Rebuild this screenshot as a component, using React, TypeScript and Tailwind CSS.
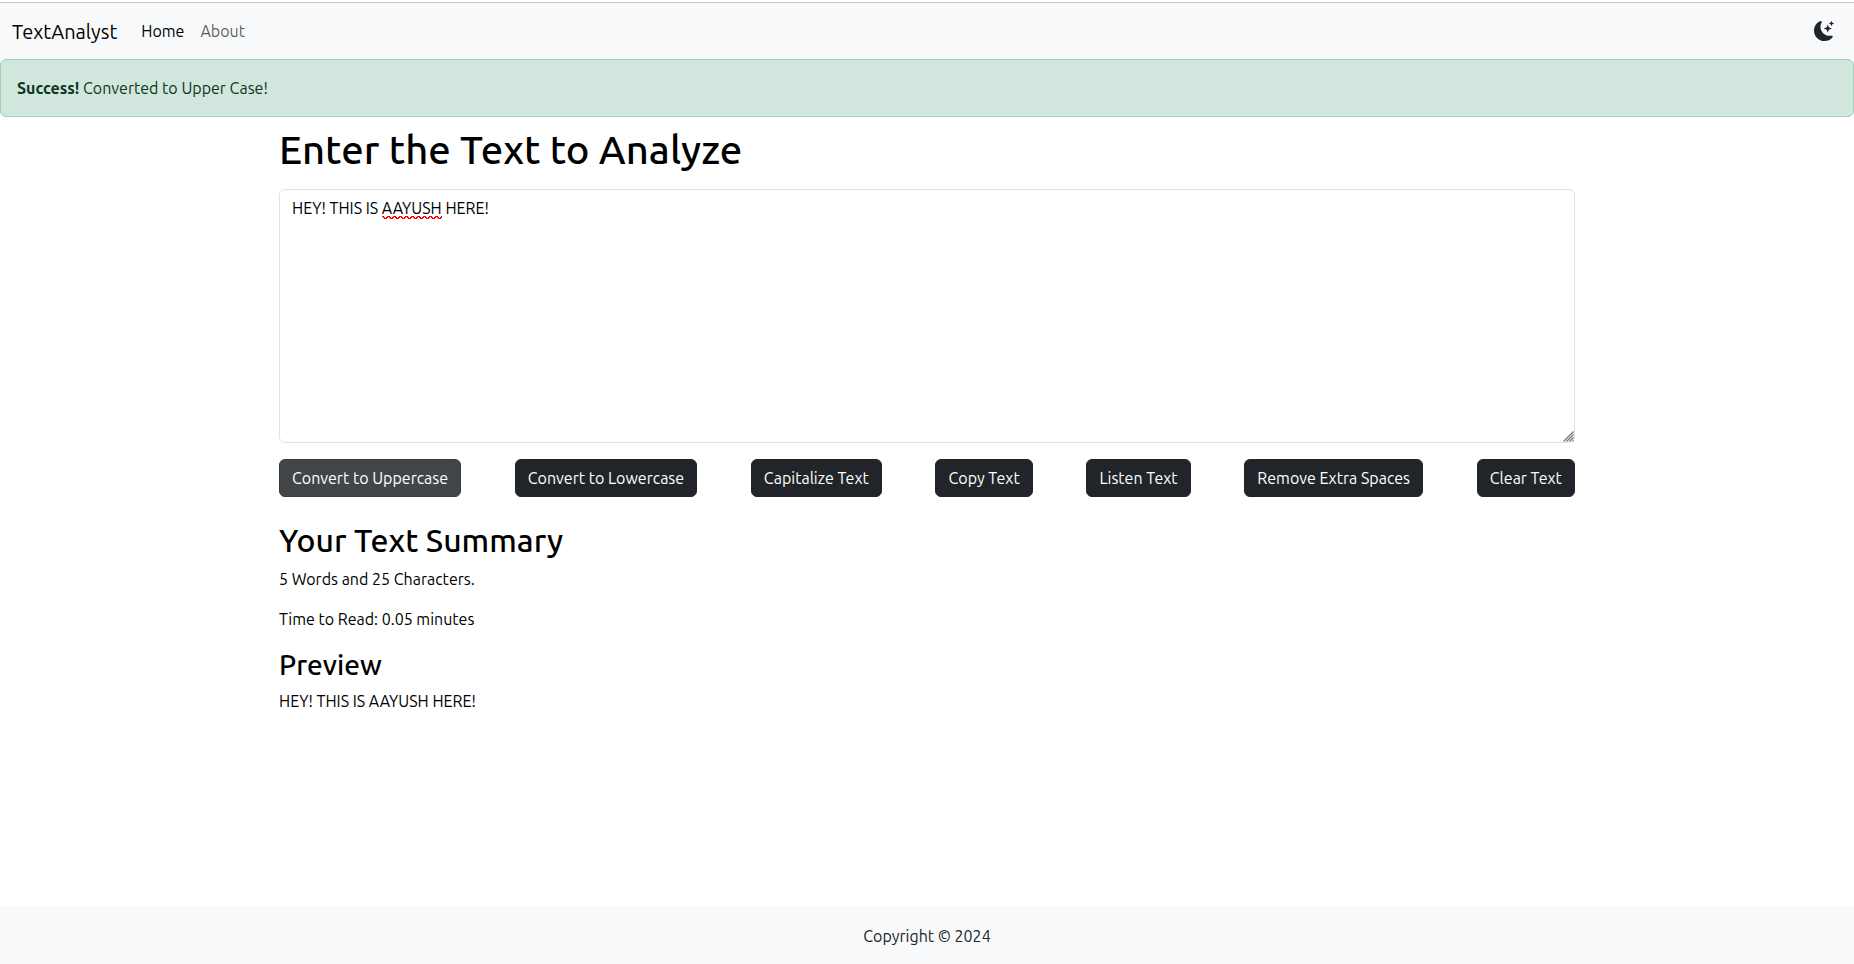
import { useState } from "react";
import { BsMoonStarsFill } from "react-icons/bs";

const buttonBase =
  "rounded-md border px-3 py-1.5 leading-6 text-white hover:border-[#373b3e] hover:bg-[#424649]";

type Action = { label: string; message: string; run: (text: string) => string };

const actions: Action[] = [
  { label: "Convert to Uppercase", message: "Converted to Upper Case!", run: (t) => t.toUpperCase() },
  { label: "Convert to Lowercase", message: "Converted to Lower Case!", run: (t) => t.toLowerCase() },
  {
    label: "Capitalize Text",
    message: "Text Capitalized!",
    run: (t) => t.toLowerCase().replace(/\b\w/g, (c) => c.toUpperCase()),
  },
  {
    label: "Copy Text",
    message: "Copied to Clipboard!",
    run: (t) => {
      navigator.clipboard?.writeText(t);
      return t;
    },
  },
  {
    label: "Listen Text",
    message: "Speaking the Text!",
    run: (t) => {
      window.speechSynthesis?.speak(new SpeechSynthesisUtterance(t));
      return t;
    },
  },
  {
    label: "Remove Extra Spaces",
    message: "Extra Spaces Removed!",
    run: (t) => t.split(/\s+/).join(" ").trim(),
  },
  { label: "Clear Text", message: "Text Cleared!", run: () => "" },
];

const misspelled = "AAYUSH";

function Squiggle() {
  return (
    <svg className="absolute top-full left-0 -mt-px h-[3px] w-full" shapeRendering="crispEdges">
      <defs>
        <pattern id="squiggle" width="6" height="3" patternUnits="userSpaceOnUse">
          <path d="M0 0h2v1H0zM1 1h2v1H1zM2 2h3v1H2zM4 1h2v1H4zM5 0h1v1H5z" fill="#f00" />
        </pattern>
      </defs>
      <rect width="100%" height="3" fill="url(#squiggle)" />
    </svg>
  );
}

function SpellingMarks({ text }: { text: string }) {
  const parts = text.split(misspelled);
  return (
    <div
      aria-hidden="true"
      className="pointer-events-none absolute inset-0 overflow-hidden border border-transparent px-3 py-1.5 leading-6 whitespace-pre-wrap text-transparent select-none"
    >
      {parts.map((part, i) => (
        <span key={i}>
          {part}
          {i < parts.length - 1 && (
            <span className="relative">
              {misspelled}
              <Squiggle />
            </span>
          )}
        </span>
      ))}
    </div>
  );
}

function ResizeGrip() {
  return (
    <svg
      aria-hidden="true"
      viewBox="0 0 11 11"
      className="pointer-events-none absolute right-px bottom-px size-[11px] bg-white"
    >
      <path
        d="M0.5 10.5L10.5 0.5M3.5 10.5L10.5 3.5M6.5 10.5L10.5 6.5M9.5 10.5L10.5 9.5"
        stroke="#6f6f6f"
        strokeWidth="1.2"
      />
    </svg>
  );
}

export default function App() {
  const [text, setText] = useState("HEY! THIS IS AAYUSH HERE!");
  const [message, setMessage] = useState("Converted to Upper Case!");
  const [active, setActive] = useState("Convert to Uppercase");
  const words = text.split(/\s+/).filter(Boolean).length;

  return (
    <div className="flex min-h-screen flex-col bg-white pt-0.5 font-['Ubuntu','Noto_Sans',sans-serif] text-base text-black">
      <nav className="flex items-center border-t border-[#c6c6c6] bg-[#f8f9fa] px-3 py-2">
        <a href="#" className="mr-4 pt-[5px] pb-1 text-xl leading-[31px]">
          TextAnalyst
        </a>
        <a href="#" className="p-2 leading-6">
          Home
        </a>
        <a href="#about" className="p-2 leading-6 text-black/65">
          About
        </a>
        <button type="button" aria-label="Toggle dark mode" className="mr-2 ml-auto text-[#212529]">
          <BsMoonStarsFill size={20} />
        </button>
      </nav>

      <div
        role="alert"
        className="rounded-md border border-[#a3cfbb] bg-[#d1e7dd] p-4 leading-6 text-[#0a3622]"
      >
        <strong className="font-bold">Success!</strong> {message}
      </div>

      <main className="mx-auto w-full max-w-[1320px] grow px-3 pt-[9px]">
        <h1 className="mb-[15px] text-[40px] leading-12 font-medium">
          <label htmlFor="source">Enter the Text to Analyze</label>
        </h1>
        <div className="relative">
          <textarea
            id="source"
            rows={10}
            spellCheck={false}
            value={text}
            onChange={(e) => setText(e.target.value)}
            className="block w-full rounded-md border border-[#dee2e6] bg-white px-3 py-1.5 leading-6 outline-none"
          />
          <SpellingMarks text={text} />
          <ResizeGrip />
        </div>

        <div className="mt-4 mb-6 flex flex-wrap justify-between gap-2">
          {actions.map(({ label, message: done, run }) => (
            <button
              key={label}
              type="button"
              onClick={() => {
                setText(run(text));
                setMessage(done);
                setActive(label);
              }}
              className={`${buttonBase} ${
                label === active ? "border-[#373b3e] bg-[#424649]" : "border-[#212529] bg-[#212529]"
              }`}
            >
              {label}
            </button>
          ))}
        </div>

        <h2 className="mb-2 text-[32px] leading-[38px] font-medium">Your Text Summary</h2>
        <p className="mb-4 leading-6">
          {words} Words and {text.length} Characters.
        </p>
        <p className="mb-4 leading-6">Time to Read: {(words * 0.01).toFixed(2)} minutes</p>
        <h3 className="mb-1.5 text-[28px] leading-9 font-medium">Preview</h3>
        <p className="mb-4 leading-6">{text}</p>
      </main>

      <footer className="bg-[#f8f9fa] pt-[18px] pb-4 text-center leading-6 text-[#212529]">
        Copyright © 2024
      </footer>
    </div>
  );
}
